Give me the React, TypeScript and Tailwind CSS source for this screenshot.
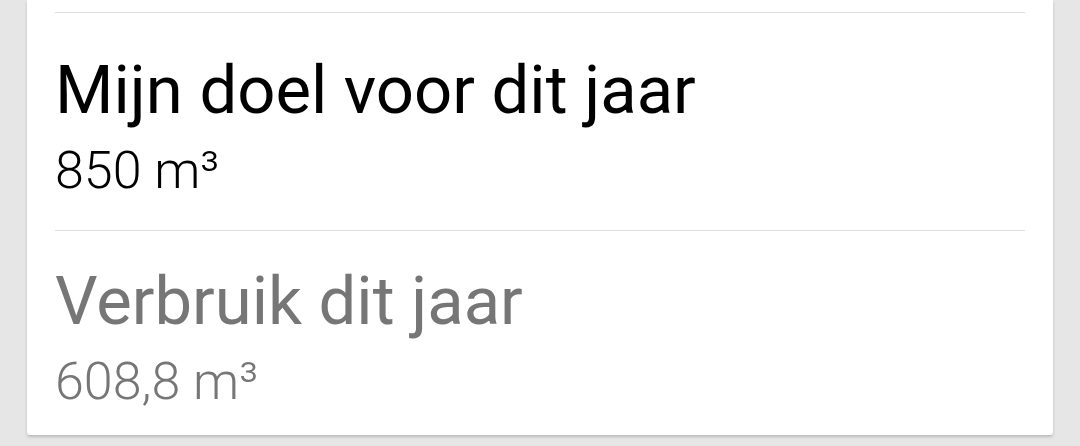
export default function App() {
  const items = [
    { title: 'Mijn doel voor dit jaar', value: '850 m³', muted: false, pad: 'pt-[44px] pb-[33px]' },
    { title: 'Verbruik dit jaar', value: '608,8 m³', muted: true, pad: 'pt-[37px] pb-[27px]' },
  ];

  return (
    <div
      className="w-[1080px] h-[446px] bg-[#e6e6e6] px-[27px] overflow-hidden"
      style={{ fontFamily: 'Roboto, "Noto Sans", sans-serif' }}
    >
      {/* card, top edge scrolled out of view */}
      <div className="w-[1026px] bg-white rounded-b-[3px] shadow-[0_2px_3px_rgba(0,0,0,0.18)] px-[28px] pt-[12px]">
        {items.map((item) => (
          <div key={item.title} className="border-t border-[#dedede]">
            <div className={item.pad}>
              <p
                className={`text-[67px] leading-none ${item.muted ? 'text-[#767676]' : 'text-black'}`}
              >
                {item.title}
              </p>
              <p
                className={`mt-[21px] text-[52px] leading-none font-light ${item.muted ? 'text-[#767676]' : 'text-black'}`}
              >
                {item.value}
              </p>
            </div>
          </div>
        ))}
      </div>
    </div>
  );
}
